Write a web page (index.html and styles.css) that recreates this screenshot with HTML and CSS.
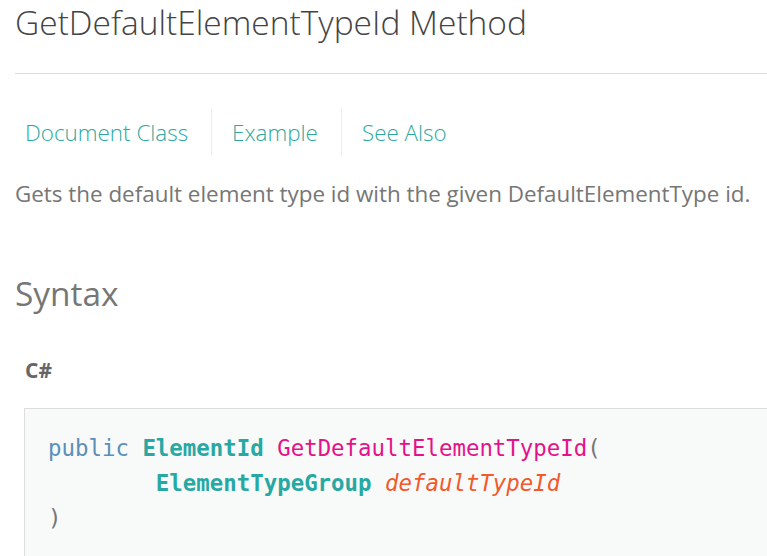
FILE: index.html
```html
<!DOCTYPE html>
<html lang="en">
<head>
<meta charset="utf-8">
<title>GetDefaultElementTypeId Method</title>
<link rel="stylesheet" href="styles.css">
</head>
<body>
<main class="page">
  <h1 class="title">GetDefaultElementTypeId Method</h1>
  <hr class="rule">
  <nav class="tabs">
    <a class="tab tab-first" href="#">Document Class</a>
    <a class="tab" href="#">Example</a>
    <a class="tab" href="#">See Also</a>
  </nav>
  <p class="summary">Gets the default element type id with the given DefaultElementType id.</p>
  <h2 class="section">Syntax</h2>
  <h4 class="lang">C#</h4>
  <pre class="code"><span class="kw">public</span> <span class="type">ElementId</span> <span class="fn">GetDefaultElementTypeId</span><span class="pn">(</span>
        <span class="type">ElementTypeGroup</span> <span class="param">defaultTypeId</span>
<span class="pn">)</span></pre>
</main>
</body>
</html>
```
FILE: styles.css
```css
html, body {
  margin: 0;
  padding: 0;
  background: #ffffff;
}
body {
  font-family: "Open Sans", "Liberation Sans", sans-serif;
  overflow: hidden;
}
.page {
  padding: 0 0 0 15px;
  width: 820px;
}
.title {
  margin: 0;
  padding-top: 0;
  font-size: 33.5px;
  font-weight: 300;
  color: #444;
  line-height: 44px;
}
.rule {
  margin: 29px 0 0 0;
  border: 0;
  border-top: 1px solid #dcdcdc;
  height: 0;
}
.tabs {
  display: flex;
  margin-top: 35px;
  height: 46px;
  align-items: center;
}
.tab {
  display: flex;
  align-items: center;
  height: 46px;
  padding: 0 23px 0 20px;
  border-left: 1px solid #eeeeee;
  color: #2ba8a2;
  text-decoration: none;
  font-size: 22.4px;
  font-weight: 300;
}
.tab-first {
  border-left: 0;
  padding-left: 10px;
}
.summary {
  margin: 24px 0 0 0;
  font-size: 22.4px;
  color: #767676;
  line-height: 30px;
}
.section {
  margin: 62px 0 0 0;
  font-size: 33.4px;
  font-weight: 400;
  color: #767676;
  line-height: 44px;
}
.lang {
  margin: 42px 0 0 10px;
  font-size: 21px;
  font-weight: 700;
  color: #666;
  line-height: 26px;
}
.code {
  margin: 25px 0 0 9px;
  padding: 22px 23px 30px 23px;
  background: #f8f9f9;
  border: 1px solid #dddddd;
  font-family: "DejaVu Sans Mono", "Liberation Mono", monospace;
  font-size: 22.4px;
  line-height: 35px;
  color: #666;
}
.kw { color: #5a8fb8; }
.type { color: #27a8a3; font-weight: 700; }
.fn { color: #e4128a; }
.param { color: #f15a29; font-style: italic; }
.pn { color: #777; }
```
